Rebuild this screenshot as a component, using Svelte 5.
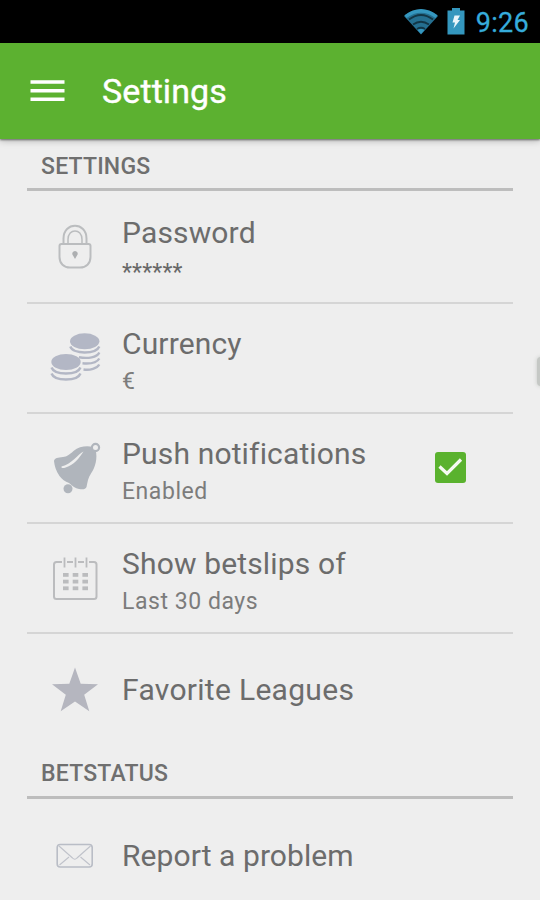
<script>
  const settings = [
    { icon: 'lock', title: 'Password', detail: '******' },
    { icon: 'coins', title: 'Currency', detail: '€' },
    { icon: 'bell', title: 'Push notifications', detail: 'Enabled', checkable: true },
    { icon: 'calendar', title: 'Show betslips of', detail: 'Last 30 days' },
    { icon: 'star', title: 'Favorite Leagues' }
  ];
  const status = [{ icon: 'mail', title: 'Report a problem' }];
  let push = $state(true);
  const dots = [0, 1, 2].flatMap((r) => [0, 1, 2].map((c) => [c, r]));
</script>

{#snippet icon(name)}
  <svg class="icon" viewBox="0 0 60 60" fill="none">
    {#if name === 'lock'}
      <g stroke="#bbbdbf" stroke-width="2">
        <path d="M18.500 25V19.500C18.500 2.500 41.500 2.500 41.500 19.500V25" />
        <path d="M23 25V20.500C23 9 37 9 37 20.500V25" stroke-width="1.500" />
        <path d="M16.500 25H43.500Q45.500 25 45.500 27V38C45.500 44.500 41 48.500 35 48.500H25C19 48.500 14.500 44.500 14.500 38V27Q14.500 25 16.500 25Z" />
      </g>
      <path d="M30 32a2.700 2.700 0 0 1 2 4.500L30 40 28 36.500a2.700 2.700 0 0 1 2-4.500Z" fill="#adafb1" />
    {:else if name === 'coins'}
      <g fill="#b3b7c5">
        <ellipse cx="39.700" cy="11.300" rx="14.700" ry="8" />
        <ellipse cx="21" cy="32" rx="14.700" ry="8" />
      </g>
      <g stroke="#b3b7c5" stroke-width="2.400">
        <path d="M25.300 16.500C28 24.500 51 24.500 54.300 16.500" />
        <path d="M34 27.300C43 28.800 52 27.500 54.300 22.500" />
        <path d="M37.500 33.300C45 34 52 32.500 54.300 28.500" />
        <path d="M38.500 39.500C45 40.500 52 38.500 54.300 34.500" />
        <path d="M6.500 37.500C9.500 45.500 32.500 45.500 35.500 37.500" />
        <path d="M6.500 43.500C9.500 51.500 32.500 51.500 35.500 43.500" />
      </g>
    {:else if name === 'bell'}
      <path d="M47.500 6.800C41 5.500 34 6.500 28.500 11C24 15 22 16.500 18 17C13 17.500 9.500 18 9 21C9.500 26 11 31 14.500 36C17 39.500 20 41.500 24 43C28 46 30 48.500 34 49C38 49.500 40.500 49.500 41.500 47C42.500 42 43 38 46 33.500C50 28 53 18 50.500 10Z" fill="#b0b5bc" />
      <circle cx="50.500" cy="7.500" r="3.600" fill="#eee" stroke="#b0b5bc" stroke-width="2.200" />
      <circle cx="23" cy="48.700" r="4.500" fill="#b0b5bc" />
      <path d="M38.500 11.500C33 14 27 24 16.500 26.500C16 28 18 28.500 20 27.700C29 25 34 18.500 38.500 11.500Z" fill="#eee" />
    {:else if name === 'calendar'}
      <rect x="9" y="12" width="42.500" height="37" rx="2.500" stroke="#bbbcbe" stroke-width="2" />
      <path d="M19.500 8V17M30.500 8V17M41.500 8V17" stroke="#eee" stroke-width="5" />
      <path d="M19.500 7.500V17.500M30.500 7.500V17.500M41.500 7.500V17.500" stroke="#bbbcbe" stroke-width="1.800" />
      {#each dots as [c, r]}
        <rect x={18 + c * 9.700} y={23 + r * 6.700} width="5.600" height="3.800" fill="#bbbcbe" />
      {/each}
    {:else if name === 'star'}
      <path d="M30 7.500L35.700 23.800L53 24.200L39.200 34.700L44.300 51.200L30 41.400L15.700 51.200L20.800 34.700L7 24.200L24.300 23.800Z" fill="#b5b6bf" />
    {:else if name === 'mail'}
      <rect x="12.200" y="18.500" width="35" height="22.500" rx="3" stroke="#b9bdc6" stroke-width="1.600" />
      <path d="M14 20L27.500 32Q29.800 34.500 32 32L45.500 20M14.500 39L24 31M45 39L35.500 31" stroke="#c0c3cb" stroke-width="1.100" />
    {/if}
  </svg>
{/snippet}

{#snippet row(item)}
  <li class="row" class:single={!item.detail}>
    {@render icon(item.icon)}
    <div class="copy">
      <span class="title">{item.title}</span>
      {#if item.detail}<span class="detail" class:masked={item.icon === 'lock'}>{item.detail}</span>{/if}
    </div>
    {#if item.checkable}
      <button class="check" aria-label={item.title} onclick={() => (push = !push)}>
        {#if push}
          <svg viewBox="0 0 31 31"><path d="M4.500 14.500L12 21.500L26 7.500" fill="none" stroke="#f5faf2" stroke-width="3.200" /></svg>
        {/if}
      </button>
    {/if}
  </li>
{/snippet}

<div class="screen">
  <div class="status">
    <svg class="wifi" viewBox="0 0 36 28">
      <path d="M1 8Q18-5 35 8L18 26.500Z" fill="#256f90" />
      <path d="M2.500 8.700Q18-3 33.500 8.700" fill="none" stroke="#3597bf" stroke-width="3.500" />
      <path d="M6 11.500Q18 2.500 30 11.500M10 16.500Q18 11 26 16.500M14 21Q18 18.500 22 21" fill="none" stroke="#123646" stroke-width="1.800" />
      <path d="M14.500 22Q18 19.800 21.500 22L18 26Z" fill="#3597bf" />
    </svg>
    <svg class="battery" viewBox="0 0 18 27">
      <path d="M5 0H13V2.500H17.500V26.500H.5V2.500H5Z" fill="#3497be" />
      <path d="M7.500 7.500H13L10.500 12H13L6.500 20.500L8 14.500H5.500Z" fill="#e8f5fa" />
    </svg>
    <span class="clock">9:26</span>
  </div>
  <header>
    <svg class="menu" viewBox="0 0 35 22"><path d="M.5 2H34.500M.5 10.700H34.500M.5 19.300H34.500" stroke="#fff" stroke-width="3.600" /></svg>
    <h1>Settings</h1>
  </header>
  <main>
    <h2 class="first">SETTINGS</h2>
    <ul>
      {#each settings as item}{@render row(item)}{/each}
    </ul>
    <h2 class="second">BETSTATUS</h2>
    <ul>
      {#each status as item}{@render row(item)}{/each}
    </ul>
  </main>
  <div class="handle"></div>
</div>

<style>
  :global(body) { margin: 0; background: #eee; }
  .screen {
    position: relative;
    display: flex;
    flex-direction: column;
    width: 540px;
    height: 900px;
    overflow: hidden;
    background: #eee;
    font-family: Roboto, "Liberation Sans", sans-serif;
    color: #6c6c6c;
  }
  .status {
    display: flex;
    flex: none;
    align-items: center;
    height: 43px;
    padding-right: 11px;
    justify-content: flex-end;
    background: #000;
    box-sizing: border-box;
  }
  .wifi { width: 36px; height: 28px; margin: 0 8px 0 0; }
  .battery { width: 18px; height: 27px; margin-right: 11px; }
  .clock { font-size: 27px; line-height: 42px; padding-top: 3px; color: #36acdb; letter-spacing: .3px; -webkit-text-stroke: .3px #36acdb; }
  header {
    z-index: 1;
    display: flex;
    flex: none;
    align-items: center;
    height: 96px;
    padding-left: 30px;
    box-sizing: border-box;
    background: #5cb130;
    box-shadow: 0 1px 2px rgba(0, 0, 0, .5), 0 2px 7px rgba(0, 0, 0, .22);
  }
  .menu { width: 35px; height: 22px; }
  h1 { margin: 0 0 0 37px; color: #fff; font-size: 34px; font-weight: 400; line-height: 50px; letter-spacing: .1px; -webkit-text-stroke: .4px #fff; }
  main { flex: 1; padding: 0 27px; }
  h2 {
    margin: 0;
    padding-left: 14px;
    box-sizing: border-box;
    border-bottom: 3px solid #bdbdbd;
    font-size: 23px;
    font-weight: 500;
    line-height: 55px;
    letter-spacing: .2px;
    color: #6f6f6f;
  }
  h2.first { height: 52px; }
  h2.second { height: 53px; }
  ul { margin: 0; padding: 0; list-style: none; }
  .row {
    display: flex;
    align-items: flex-start;
    height: 110px;
    padding: 24px 0 0 18px;
    box-sizing: border-box;
    border-bottom: 2px solid #d5d5d5;
  }
  .row:first-child:not(.single) { height: 113px; padding-top: 26px; }
  .row:last-child { height: 112px; padding-top: 26px; border: 0; }
  .row:only-child { padding-top: 27px; }
  .icon { flex: none; width: 60px; height: 60px; }
  .row:not(.single) .icon { margin-top: 2px; }
  .copy { display: flex; flex-direction: column; width: 304px; margin: -3px 0 0 17px; white-space: nowrap; }
  .single .copy { margin-top: 11px; }
  .title { font-size: 30px; line-height: 37px; letter-spacing: .15px; }
  .row:last-child:not(:only-child) .title { letter-spacing: .3px; }
  .row:only-child .title { letter-spacing: .08px; }
  .detail { font-size: 23px; line-height: 39px; letter-spacing: .55px; color: #7c7c7c; }
  .detail.masked { padding-top: 2px; letter-spacing: .2px; color: #686868; }
  .check { width: 31px; height: 31px; margin: 14px 0 0 9px; padding: 0; border: 0; border-radius: 3px; background: #5ab22e; }
  .check svg { display: block; width: 31px; height: 31px; }
  .handle {
    position: absolute;
    top: 357px;
    right: -5px;
    width: 8px;
    height: 29px;
    border-radius: 4px 0 0 4px;
    background: #c5c8c5;
    box-shadow: 0 0 4px #c5c8c5;
  }
</style>
